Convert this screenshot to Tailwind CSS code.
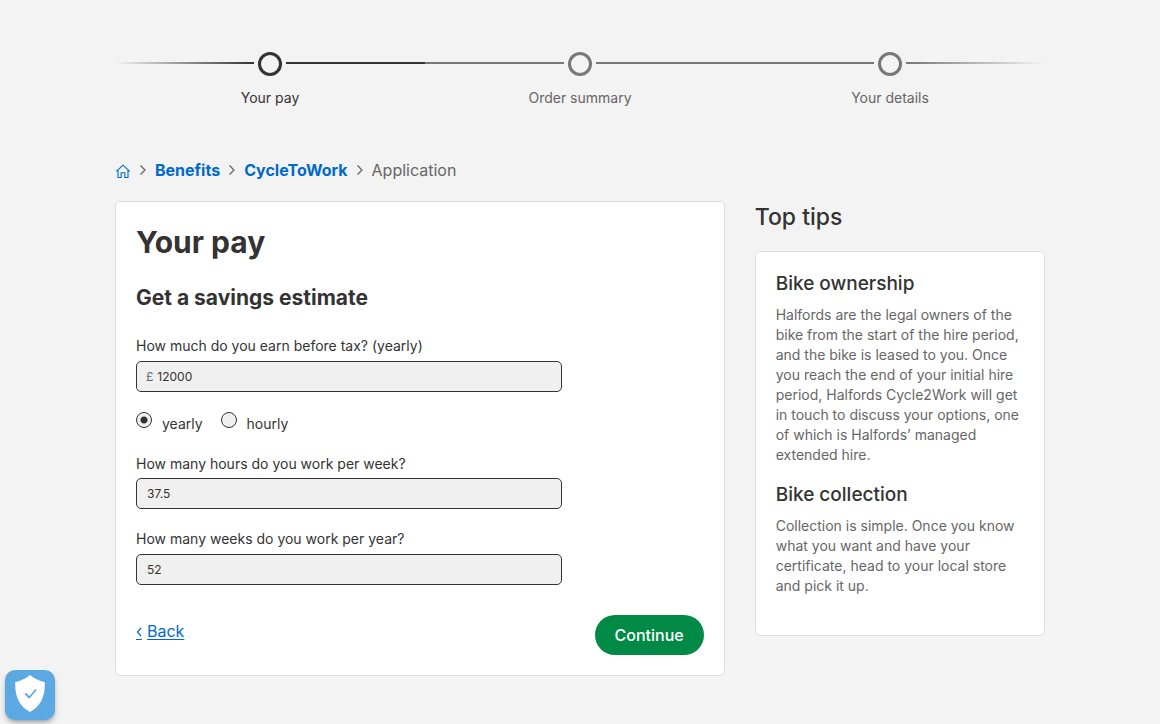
<!DOCTYPE html>
<html lang="en">
<head>
<meta charset="utf-8">
<meta name="viewport" content="width=device-width, initial-scale=1">
<title>Your pay – CycleToWork application</title>
<script src="https://cdn.jsdelivr.net/npm/@tailwindcss/browser@4"></script>
</head>
<body class="min-h-screen bg-[#f3f3f3] font-['Inter','Liberation_Sans',sans-serif] text-sm text-[#333]">
<div class="mx-auto max-w-[960px] px-[15px] pt-[52px]">

  <!-- Progress steps -->
  <ol class="grid grid-cols-3 text-center leading-5">
    <li aria-current="step">
      <div class="flex items-center gap-1">
        <span class="mb-0.5 h-0.5 flex-1 bg-linear-to-r from-transparent to-[#333]"></span>
        <span class="size-6 rounded-full border-3 border-[#333]"></span>
        <span class="mb-0.5 h-0.5 flex-1 bg-[#333]"></span>
      </div>
      <p class="mt-3">Your pay</p>
    </li>
    <li class="text-[#666]">
      <div class="flex items-center gap-1">
        <span class="mb-0.5 h-0.5 flex-1 bg-[#777]"></span>
        <span class="size-6 rounded-full border-3 border-[#777]"></span>
        <span class="mb-0.5 h-0.5 flex-1 bg-[#777]"></span>
      </div>
      <p class="mt-3">Order summary</p>
    </li>
    <li class="text-[#666]">
      <div class="flex items-center gap-1">
        <span class="mb-0.5 h-0.5 flex-1 bg-[#777]"></span>
        <span class="size-6 rounded-full border-3 border-[#777]"></span>
        <span class="mb-0.5 h-0.5 flex-1 bg-linear-to-r from-[#777] to-transparent"></span>
      </div>
      <p class="mt-3">Your details</p>
    </li>
  </ol>

  <!-- Breadcrumb -->
  <nav aria-label="Breadcrumb" class="mt-[50px]">
    <ol class="flex items-center text-base leading-6">
      <li><a href="#" aria-label="Home" class="block text-[#0069cc]">
        <svg class="mt-0.5 h-4 w-4" viewBox="0 0 16 16" fill="none" stroke="currentColor" stroke-width="1.1"><path d="M1.3 8.4 8 2.2l6.700 6.200M3 7.300v7.200h3.200V9.700h3.600v4.800H13V7.300"/></svg></a></li>
      <li class="flex items-center"><svg class="mx-2 h-3 w-2" viewBox="0 0 8 12" fill="none" stroke="#666" stroke-width="1.300"><path d="m1.500 1.500 4.500 4.500-4.500 4.500"/></svg><a href="#" class="font-bold text-[#0069cc]">Benefits</a></li>
      <li class="flex items-center"><svg class="mx-2 h-3 w-2" viewBox="0 0 8 12" fill="none" stroke="#666" stroke-width="1.300"><path d="m1.500 1.500 4.500 4.500-4.500 4.500"/></svg><a href="#" class="font-bold text-[#0069cc]">CycleToWork</a></li>
      <li class="flex items-center text-[#666]"><svg class="mx-2 h-3 w-2" viewBox="0 0 8 12" fill="none" stroke="#666" stroke-width="1.300"><path d="m1.500 1.500 4.500 4.500-4.500 4.500"/></svg>Application</li>
    </ol>
  </nav>

  <div class="mt-[19px] grid grid-cols-[2.1fr_1fr] items-start gap-[30px] pb-12">
    <main class="rounded-[5px] border border-[#ddd] bg-white p-5">
      <h1 class="text-[30px] leading-10 font-bold">Your pay</h1>
      <h2 class="mt-5 text-[21px] leading-8 font-bold">Get a savings estimate</h2>
      <form>
        <div class="w-3/4">
          <label for="pay" class="mt-[22px] block leading-5">How much do you earn before tax? (yearly)</label>
          <div class="mt-[5px] flex h-[31px] items-center rounded-[5px] border border-[#333] bg-[#f0f0f0] pl-[9px] text-xs">
            <span class="text-[#666]">£</span>
            <input id="pay" type="text" value="12000" class="h-full min-w-0 flex-1 bg-transparent pl-1 outline-none">
          </div>
          <fieldset class="mt-5 flex gap-[18px]">
            <label class="flex leading-6"><input type="radio" name="period" checked class="mr-2.5 size-4 appearance-none rounded-full border border-[#333] bg-[#f0f0f0] bg-[radial-gradient(circle,#333_3px,transparent_4px)]">yearly</label>
            <label class="flex leading-6"><input type="radio" name="period" class="mr-2.5 size-4 appearance-none rounded-full border border-[#333] bg-[#f0f0f0]">hourly</label>
          </fieldset>
          <label for="hours" class="mt-[18px] block leading-5">How many hours do you work per week?</label>
          <input id="hours" type="text" value="37.5" class="mt-1 block h-[31px] w-full rounded-[5px] border border-[#333] bg-[#f0f0f0] px-2.5 text-xs">
          <label for="weeks" class="mt-5 block leading-5">How many weeks do you work per year?</label>
          <input id="weeks" type="text" value="52" class="mt-[5px] block h-[31px] w-full rounded-[5px] border border-[#333] bg-[#f0f0f0] px-2.5 text-xs">
        </div>
        <div class="mt-[30px] flex items-start justify-between">
          <a href="#" class="mt-1 flex items-center gap-[5px] text-base leading-6 text-[#0069cc]"><span class="border-b border-[#0069cc] pt-1 pb-px"><svg class="h-3 w-1.5" viewBox="0 0 6 12" fill="none" stroke="currentColor" stroke-width="1.200"><path d="M5 2 1.500 6 5 10"/></svg></span><span class="underline underline-offset-2">Back</span></a>
          <button type="submit" class="h-10 rounded-full bg-[#008a45] px-5 text-base font-medium text-white">Continue</button>
        </div>
      </form>
    </main>

    <aside>
      <h2 class="text-[23px] leading-8 font-medium">Top tips</h2>
      <div class="mt-[18px] rounded-[5px] border border-[#ddd] bg-white px-5 pt-4 pb-[39px]">
        <h3 class="text-[19px] leading-8 font-medium">Bike ownership</h3>
        <p class="mt-[5px] leading-5 text-[#666]">Halfords are the legal owners of the bike from the start of the hire period, and the bike is leased to you. Once you reach the end of your initial hire period, Halfords Cycle2Work will get in touch to discuss your options, one of which is Halfords’ managed extended hire.</p>
        <h3 class="mt-3.5 text-[19px] leading-8 font-medium">Bike collection</h3>
        <p class="mt-[5px] leading-5 text-[#666]">Collection is simple. Once you know what you want and have your certificate, head to your local store and pick it up.</p>
      </div>
    </aside>
  </div>
</div>

<!-- Cookie preferences -->
<button type="button" aria-label="Cookie preferences" class="fixed bottom-1 left-[5px] flex size-[50px] items-center justify-center rounded-[10px] bg-[#5ba8e2] pb-[3px] shadow-md shadow-black/25">
  <svg class="h-[37px] w-[30px]" viewBox="0 0 30 37"><path fill="#fff" d="M15 0c4 3.500 9 5.800 14.700 7C30.500 20 26 31 15 37 4 31-.5 20 .3 7 6 5.800 11 3.500 15 0Z"/><path d="m10.300 18.500 4 4 6.700-8" fill="none" stroke="#5ba8e2" stroke-width="1.800"/></svg>
</button>
</body>
</html>
